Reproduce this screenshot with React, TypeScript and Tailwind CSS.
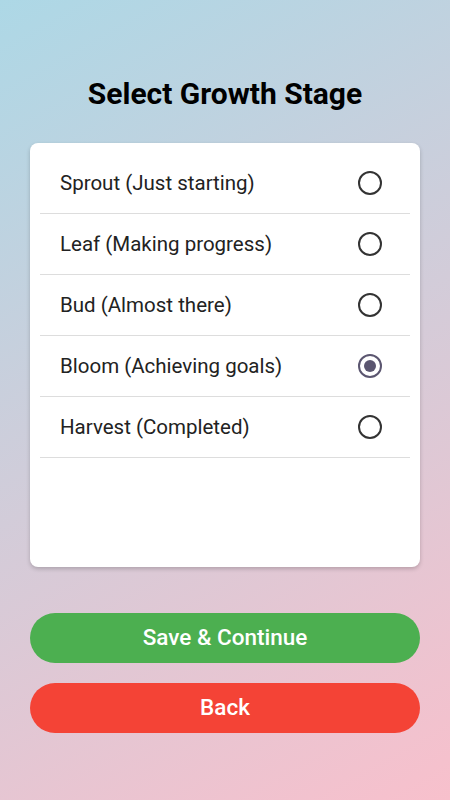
import { useState } from "react";

const stages = [
  "Sprout (Just starting)",
  "Leaf (Making progress)",
  "Bud (Almost there)",
  "Bloom (Achieving goals)",
  "Harvest (Completed)",
];

export default function App() {
  const [selected, setSelected] = useState(3);

  return (
    <div
      className="min-h-screen w-full bg-[linear-gradient(150.6deg,#add8e6,#f8c0cc)] flex flex-col px-[30px] pt-[73px]"
      style={{ fontFamily: "Roboto, 'Noto Sans', sans-serif" }}
    >
      {/* Title */}
      <h1 className="text-center text-[30px] leading-[42px] font-bold text-black">
        Select Growth Stage
      </h1>

      {/* Card */}
      <div className="mt-[28px] h-[424px] bg-white rounded-lg shadow-[0_2px_4px_rgba(0,0,0,0.2)] p-[10px]">
        {stages.map((s, i) => (
          <button
            key={s}
            onClick={() => setSelected(i)}
            className="w-full h-[61px] flex items-center justify-between border-b border-[#dddddd] pl-[20px] pr-[28px] text-left"
          >
            <span className="text-[20.5px] text-[#222222]">{s}</span>
            <span
              className={`w-[24px] h-[24px] rounded-full border-2 flex items-center justify-center ${
                selected === i ? "border-[#5b5670]" : "border-[#333333]"
              }`}
            >
              {selected === i && (
                <span className="w-[12px] h-[12px] rounded-full bg-[#5b5670]" />
              )}
            </span>
          </button>
        ))}
      </div>

      {/* Buttons */}
      <div className="mt-[46px] flex flex-col gap-[20px]">
        <button className="h-[50px] rounded-full bg-[#4caf50] text-white text-[22.5px] font-medium">
          Save &amp; Continue
        </button>
        <button className="h-[50px] rounded-full bg-[#f44336] text-white text-[22.5px] font-medium">
          Back
        </button>
      </div>
    </div>
  );
}
